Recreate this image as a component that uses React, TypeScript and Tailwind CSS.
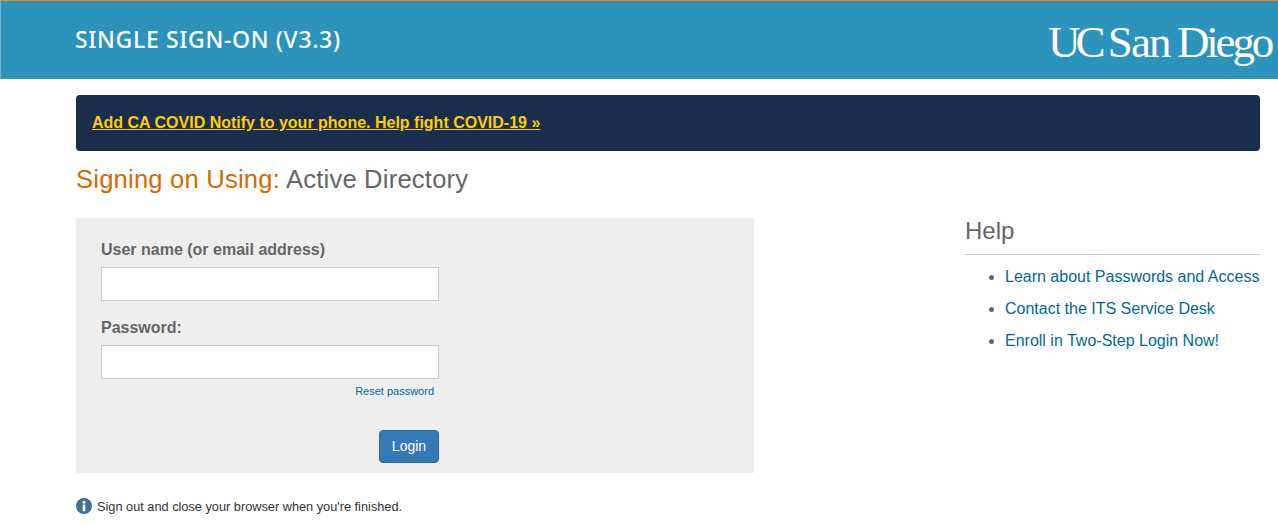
const helpLinks = [
  'Learn about Passwords and Access',
  'Contact the ITS Service Desk',
  'Enroll in Two-Step Login Now!',
]

const App = () => {
  return (
    <div className="min-h-[526px] overflow-hidden bg-white font-['Liberation_Sans',sans-serif] text-[#333]">
      {/* header */}
      <header className="flex h-[79px] items-center justify-between border-t-[1px] border-l-[1px] border-t-[#f08a00] border-l-[#6fb0cb] bg-[#2c94bc] pl-[74px] pr-[7px]">
        <h1 className="mb-[2px] font-['Noto_Sans',sans-serif] text-[23px] font-medium leading-none tracking-[0.65px] text-white">SINGLE SIGN-ON (V3.3)</h1>
        <div className="mt-[5px] whitespace-nowrap font-['Liberation_Serif',serif] text-[45px] leading-none text-white [word-spacing:-4px]">
          <span className="tracking-[-5px]">UC</span> <span className="tracking-[-1.8px]">San</span> <span className="tracking-[-3.2px]">Diego</span>
        </div>
      </header>

      <main className="pl-[76px] pr-[18px] pt-[16px]">
        {/* banner */}
        <div className="flex h-[56px] items-center rounded-[4px] bg-[#1a2d4c] px-[16px]">
          <a href="#" className="text-[16px] font-bold text-[#ffcd00] underline">
            Add CA COVID Notify to your phone. Help fight COVID-19 »
          </a>
        </div>

        <h2 className="mt-[14px] text-[25.6px] leading-[29px] tracking-[0.2px] text-[#666]">
          <span className="text-[#d46a06]">Signing on Using:</span> Active Directory
        </h2>

        <div className="mt-[24px] flex justify-between">
          {/* login */}
          <div>
            <form className="h-[255px] w-[678px] bg-[#eee] pl-[25px] pt-[22px]">
              <label className="block text-[16px] font-bold leading-[20px] text-[#666]">User name (or email address)</label>
              <input className="mt-[7px] block h-[34px] w-[338px] border border-[#ccc] bg-white" />
              <label className="mt-[17px] block text-[16px] font-bold leading-[20px] text-[#666]">Password:</label>
              <input type="password" className="mt-[7px] block h-[34px] w-[338px] border border-[#ccc] bg-white" />
              <div className="mt-[5px] w-[333px] text-right text-[11px] leading-[14px] text-[#006a96]">
                <a href="#">Reset password</a>
              </div>
              <div className="mt-[32px] flex w-[338px] justify-end">
                <button type="button" className="h-[33px] w-[60px] rounded-[4px] border border-[#2e6da4] bg-[#337ab7] text-[14px] text-white">
                  Login
                </button>
              </div>
            </form>

            <div className="mt-[25px] flex items-center gap-[5px] text-[12.75px] leading-[18px] text-[#333]">
              <svg width="16" height="16" viewBox="0 0 16 16" className="-mt-[2px]">
                <circle cx="8" cy="8" r="8" fill="#3f7199" />
                <circle cx="8" cy="4.2" r="1.5" fill="#fff" />
                <rect x="6.7" y="6.6" width="2.6" height="6.6" fill="#fff" />
              </svg>
              <span>Sign out and close your browser when you're finished.</span>
            </div>
          </div>

          {/* help */}
          <aside className="w-[295px]">
            <h3 className="-mt-[1px] border-b border-[#ccc] pb-[10px] text-[24px] leading-[27px] text-[#666]">Help</h3>
            <ul className="mt-[6px] list-disc pl-[40px] text-[#666]">
              {helpLinks.map((link) => (
                <li key={link} className="h-[32px] text-[16px] leading-[32px]">
                  <a href="#" className="whitespace-nowrap text-[#006a96]">{link}</a>
                </li>
              ))}
            </ul>
          </aside>
        </div>
      </main>
    </div>
  )
}

export default App
